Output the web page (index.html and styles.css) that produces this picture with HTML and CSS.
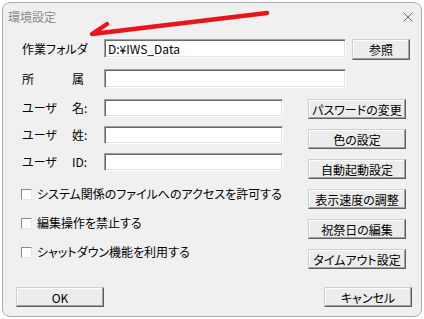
FILE: index.html
```html
<!DOCTYPE html>
<html lang="ja">
<head>
    <meta charset="UTF-8">
    <title>環境設定</title>
    <link rel="stylesheet" href="styles.css">
</head>
<body>
    <div class="dialog">
        <div class="titlebar">
            <span class="title">環境設定</span>
            <svg class="close" width="10" height="10" viewBox="0 0 10 10">
                <path d="M0.5 0.5 L9.5 9.5 M9.5 0.5 L0.5 9.5" stroke="#6a6a6a" stroke-width="1" fill="none"/>
            </svg>
        </div>

        <div class="top">
            <div class="row">
                <label class="label">作業フォルダ</label>
                <input class="field wide" type="text" value="D:¥IWS_Data">
                <button class="btn browse">参照</button>
            </div>
            <div class="row">
                <label class="label"><span class="key">所</span><span>属</span></label>
                <input class="field wide" type="text">
            </div>
        </div>

        <div class="main">
            <div class="left">
                <div class="users">
                    <div class="row">
                        <label class="label"><span class="key">ユーザ</span><span>名:</span></label>
                        <input class="field short" type="text">
                    </div>
                    <div class="row">
                        <label class="label"><span class="key">ユーザ</span><span>姓:</span></label>
                        <input class="field short" type="text">
                    </div>
                    <div class="row">
                        <label class="label"><span class="key">ユーザ</span><span>ID:</span></label>
                        <input class="field short" type="text">
                    </div>
                </div>
                <div class="checks">
                    <label class="check"><span class="box"></span>システム関係のファイルへのアクセスを許可する</label>
                    <label class="check"><span class="box"></span>編集操作を禁止する</label>
                    <label class="check"><span class="box"></span>シャットダウン機能を利用する</label>
                </div>
            </div>
            <div class="side">
                <button class="btn">パスワードの変更</button>
                <button class="btn">色の設定</button>
                <button class="btn">自動起動設定</button>
                <button class="btn">表示速度の調整</button>
                <button class="btn">祝祭日の編集</button>
                <button class="btn">タイムアウト設定</button>
            </div>
        </div>

        <div class="footer">
            <button class="btn action">OK</button>
            <button class="btn action">キャンセル</button>
        </div>

        <!-- red marker drawn over the dialog -->
        <svg class="arrow" width="420" height="315" viewBox="0 0 420 315">
            <path d="M105 22 L90 32 L265 11" stroke="#e8161c" stroke-width="4.5" stroke-linecap="round" stroke-linejoin="round" fill="none"/>
        </svg>
    </div>
</body>
</html>
```

FILE: styles.css
```css
* {
    box-sizing: border-box;
    margin: 0;
    padding: 0;
}

body {
    background-color: #ffffff;
    font-family: "Noto Sans CJK JP", "Noto Sans", sans-serif;
    font-size: 12px;
    font-feature-settings: "palt";
    color: #000;
}

.dialog {
    position: relative;
    display: flex;
    flex-direction: column;
    width: 420px;
    height: 315px;
    margin: 2px;
    border: 1px solid #ababab;
    border-radius: 8px;
    background-color: #f0f0f0;
}

.titlebar {
    display: flex;
    justify-content: space-between;
    align-items: center;
    height: 26px;
    padding: 0 8px 0 5px;
}

.title {
    color: #8c8c8c;
    font-size: 12px;
}

.close {
    margin-top: 1px;
}

.top {
    display: flex;
    flex-direction: column;
    gap: 9px;
    padding: 10px 0 0 19px;
}

.row {
    display: flex;
    align-items: flex-start;
}

.label {
    display: flex;
    width: 82px;
    height: 19px;
    line-height: 19px;
}

.key {
    width: 50px;
}

.field {
    height: 19px;
    padding: 0 3px;
    font-family: inherit;
    font-size: 12px;
    font-feature-settings: "palt";
    background-color: #fff;
    border: 1px solid;
    border-color: #a0a0a0 #ffffff #ffffff #a0a0a0;
    box-shadow: inset 1px 1px #696969, inset -1px -1px #e3e3e3;
    outline: none;
}

.wide {
    width: 242px;
}

.short {
    width: 179px;
    height: 18px;
}

.btn {
    height: 20px;
    font-family: inherit;
    font-size: 12px;
    font-feature-settings: "palt";
    color: #000;
    background-color: #ececec;
    border: 1px solid;
    border-color: #cfcfcf #5f5f5f #5f5f5f #cfcfcf;
    box-shadow: inset -1px -1px #a0a0a0, inset 1px 1px #ffffff;
}

.browse {
    width: 58px;
    height: 21px;
    margin-left: 6px;
}

.main {
    display: flex;
    padding-left: 19px;
}

.left {
    width: 286px;
    padding-top: 11px;
}

.users {
    display: flex;
    flex-direction: column;
    gap: 9px;
}

.users .label {
    height: 18px;
    line-height: 18px;
}

.checks {
    display: flex;
    flex-direction: column;
    gap: 13px;
    margin-top: 15px;
}

.check {
    display: flex;
    align-items: center;
    height: 16px;
    line-height: 16px;
    margin-left: -1px;
    white-space: nowrap;
}

.box {
    width: 11px;
    height: 11px;
    margin-right: 5px;
    background-color: #fff;
    border: 1px solid;
    border-color: #8a8a8a #e8e8e8 #e8e8e8 #8a8a8a;
}

.side {
    display: flex;
    flex-direction: column;
    gap: 10px;
    padding-top: 11px;
}

.side .btn {
    width: 98px;
}

.footer {
    display: flex;
    justify-content: space-between;
    margin-top: auto;
    padding: 0 9px 9px 13px;
}

.action {
    width: 88px;
}

.arrow {
    position: absolute;
    left: -1px;
    top: -1px;
    pointer-events: none;
}
```
